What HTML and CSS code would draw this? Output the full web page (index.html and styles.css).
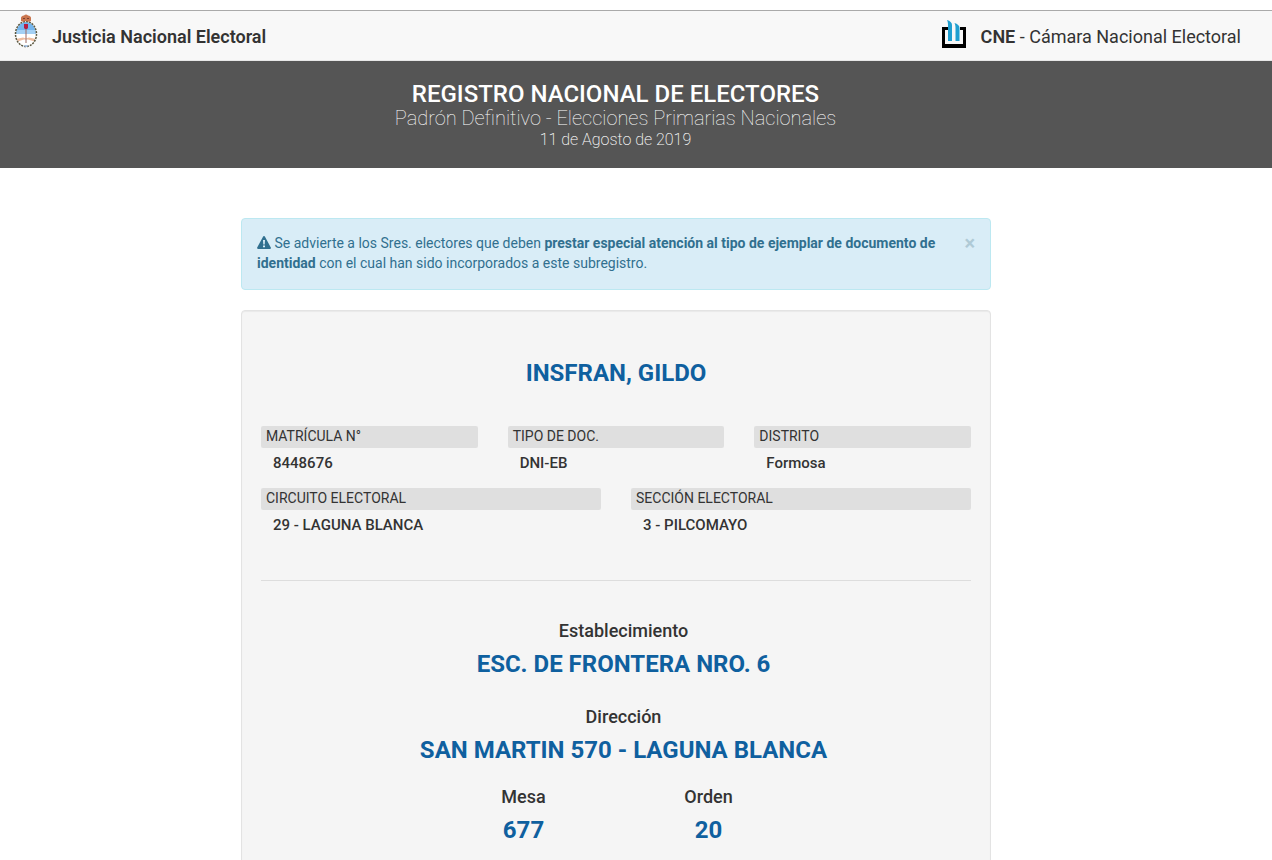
FILE: index.html
```html
<!DOCTYPE html>
<html lang="es">
<head>
<meta charset="utf-8">
<meta name="viewport" content="width=device-width, initial-scale=1">
<title>Registro Nacional de Electores</title>
<link rel="stylesheet" href="styles.css">
</head>
<body>
<header class="navbar">
  <div class="brand">
    <svg class="shield" width="24" height="34" viewBox="0 0 24 34" aria-hidden="true">
      <defs><clipPath id="oval"><ellipse cx="12" cy="20" rx="10" ry="12"/></clipPath></defs>
      <ellipse cx="12" cy="20" rx="10" ry="12" fill="#fff"/>
      <g clip-path="url(#oval)">
        <path d="M0 7h24v13H0z" fill="#74b5ee"/>
        <path d="M0 16h24v4H0z" fill="#a4d0f4"/>
        <path d="M2 25l7-1.500 3 1 3-1 7 1.500v3l-8-2.500h-4L2 28z" fill="#efbda0"/>
      </g>
      <ellipse cx="12" cy="20" rx="10.500" ry="12.500" fill="none" stroke="#5c5840" stroke-width="1.500" stroke-dasharray="2 1"/>
      <path d="M12 12v17" stroke="#9a6660" stroke-width="1"/>
      <path d="M10 10h4v4l-1 1h-2l-1-1z" fill="#b51d43"/>
      <path d="M7 7V4q0-2 3-2.500Q12-.5 14 1.500q3 .5 3 2.500v3l-2 .8-3-.8-3 .8z" fill="#c9754e"/>
      <path d="M9 4h2v1H9zM13 4h2v1h-2z" fill="#7b4030"/>
      <path d="M9 32l3-1 3 1-3 1z" fill="#9cbce5"/>
    </svg>
    <strong class="brand-name">Justicia Nacional Electoral</strong>
  </div>
  <div class="brand">
    <svg width="26" height="28" viewBox="0 0 26 28" aria-hidden="true">
      <path d="M1 7h7v3H4v14h18V10h-3V7h6v21H1z" fill="#000"/>
      <path d="M6 0c3 1 5 2.500 5 5v16H7V6c0-2 0-4-1-6zM13.500 3c3 1 5 2.500 5 5v13h-4V9c0-2 0-4-1-6z" fill="#209fd0"/>
    </svg>
    <span class="brand-name"><strong>CNE</strong> - Cámara Nacional Electoral</span>
  </div>
</header>
<section class="banner">
  <h1 class="banner-title">REGISTRO NACIONAL DE ELECTORES</h1>
  <p class="banner-subtitle">Padrón Definitivo - Elecciones Primarias Nacionales</p>
  <p class="banner-date">11 de Agosto de 2019</p>
</section>
<main class="content">
  <div class="container">
    <div class="alert" role="alert">
      <p class="alert-text"><svg class="alert-icon" width="14" height="13" viewBox="0 0 14 13" aria-hidden="true"><path fill="currentColor" fill-rule="evenodd" d="M7 0c.5 0 .8.3 1 .7l5.800 10.800c.4.700 0 1.500-.8 1.500H1c-.8 0-1.200-.8-.8-1.500L6 .7C6.200.3 6.500 0 7 0zM6 4l.3 4.500h1.400L8 4zM6 9.500v1.700h2V9.500z"/></svg> Se advierte a los Sres. electores que deben <strong>prestar especial atención al tipo de ejemplar de documento de identidad</strong> con el cual han sido incorporados a este subregistro.</p>
      <button class="close" type="button" aria-label="Cerrar">×</button>
    </div>
    <article class="well">
      <h2 class="headline">INSFRAN, GILDO</h2>
      <dl class="fields fields-three">
        <div><dt>MATRÍCULA N°</dt><dd>8448676</dd></div>
        <div><dt>TIPO DE DOC.</dt><dd>DNI-EB</dd></div>
        <div><dt>DISTRITO</dt><dd>Formosa</dd></div>
      </dl>
      <dl class="fields fields-two">
        <div><dt>CIRCUITO ELECTORAL</dt><dd>29 - LAGUNA BLANCA</dd></div>
        <div><dt>SECCIÓN ELECTORAL</dt><dd>3 - PILCOMAYO</dd></div>
      </dl>
      <hr class="divider">
      <dl class="place">
        <div><dt>Establecimiento</dt><dd>ESC. DE FRONTERA NRO. 6</dd></div>
        <div><dt>Dirección</dt><dd>SAN MARTIN 570 - LAGUNA BLANCA</dd></div>
      </dl>
      <dl class="table-info">
        <div><dt>Mesa</dt><dd>677</dd></div>
        <div><dt>Orden</dt><dd>20</dd></div>
      </dl>
    </article>
  </div>
</main>
</body>
</html>
```
FILE: styles.css
```css
* { box-sizing: border-box; }

body {
  margin: 0;
  padding-top: 10px;
  background: #fff;
  color: #333;
  font: 400 14px/20px Roboto, "Liberation Sans", sans-serif;
}

h1, h2, p, dl, dd { margin: 0; }
strong { font-weight: 700; }

.navbar {
  display: flex;
  justify-content: space-between;
  align-items: center;
  height: 51px;
  padding: 0 31px 0 14px;
  border-top: 1px solid #aaa;
  border-bottom: 1px solid #e7e7e7;
  background: #f8f8f8;
  font-size: 18px;
}

.brand { display: flex; align-items: center; gap: 14px; }
.brand svg { flex: none; margin-bottom: 4px; }
.brand .shield { margin-bottom: 10px; }
.brand-name { padding-top: 2px; }
.brand strong { font-weight: 600; }

.banner {
  padding: 20px 41px 18px 0;
  background: #555;
  color: #fff;
  text-align: center;
}

.banner-title { font-size: 24px; line-height: 26px; font-weight: 500; }
.banner-subtitle { font-size: 20px; line-height: 22px; font-weight: 100; }
.banner-date { font-size: 16px; line-height: 21px; font-weight: 200; }

.content { padding: 50px 40px 0 0; }
.container { max-width: 750px; margin: 0 auto; }

.alert {
  display: flex;
  align-items: flex-start;
  justify-content: space-between;
  gap: 20px;
  margin-bottom: 20px;
  padding: 14px 15px 16px;
  border: 1px solid #bce8f1;
  border-radius: 4px;
  background: #d9edf7;
  color: #31708f;
}

.alert-icon { vertical-align: -1px; }

.close {
  padding: 0;
  border: 0;
  background: none;
  color: #afcad6;
  font: 700 20px/20px Roboto, sans-serif;
}

.well {
  padding: 48px 19px 19px;
  border: 1px solid #e3e3e3;
  border-radius: 4px;
  background: #f5f5f5;
  box-shadow: inset 0 1px 1px rgba(0, 0, 0, .05);
}

.headline {
  margin-bottom: 39px;
  color: #0f609f;
  font-size: 24px;
  line-height: 28px;
  font-weight: 700;
  text-align: center;
}

.fields { display: grid; gap: 30px; }
.fields-three { grid-template-columns: repeat(3, 1fr); margin-bottom: 14px; }
.fields-two { grid-template-columns: repeat(2, 1fr); }
.fields dt {
  padding: 0 5px 2px;
  border-radius: 2px;
  background: #dfdfdf;
}
.fields dd {
  padding: 5px 12px 1px;
  font-size: 15px;
  font-weight: 500;
}

.divider {
  margin: 44px 0 40px;
  border: 0;
  border-top: 1px solid #ddd;
}

.place {
  display: grid;
  gap: 29px;
  margin-bottom: 23px;
  padding-left: 15px;
  text-align: center;
}
.place dt, .table-info dt { font-size: 18px; font-weight: 500; }
.place dd, .table-info dd {
  padding-top: 9px;
  color: #0f609f;
  font-size: 24px;
  line-height: 28px;
  font-weight: 700;
}

.table-info {
  display: grid;
  grid-template-columns: repeat(2, 185px);
  justify-content: center;
  text-align: center;
}
```
